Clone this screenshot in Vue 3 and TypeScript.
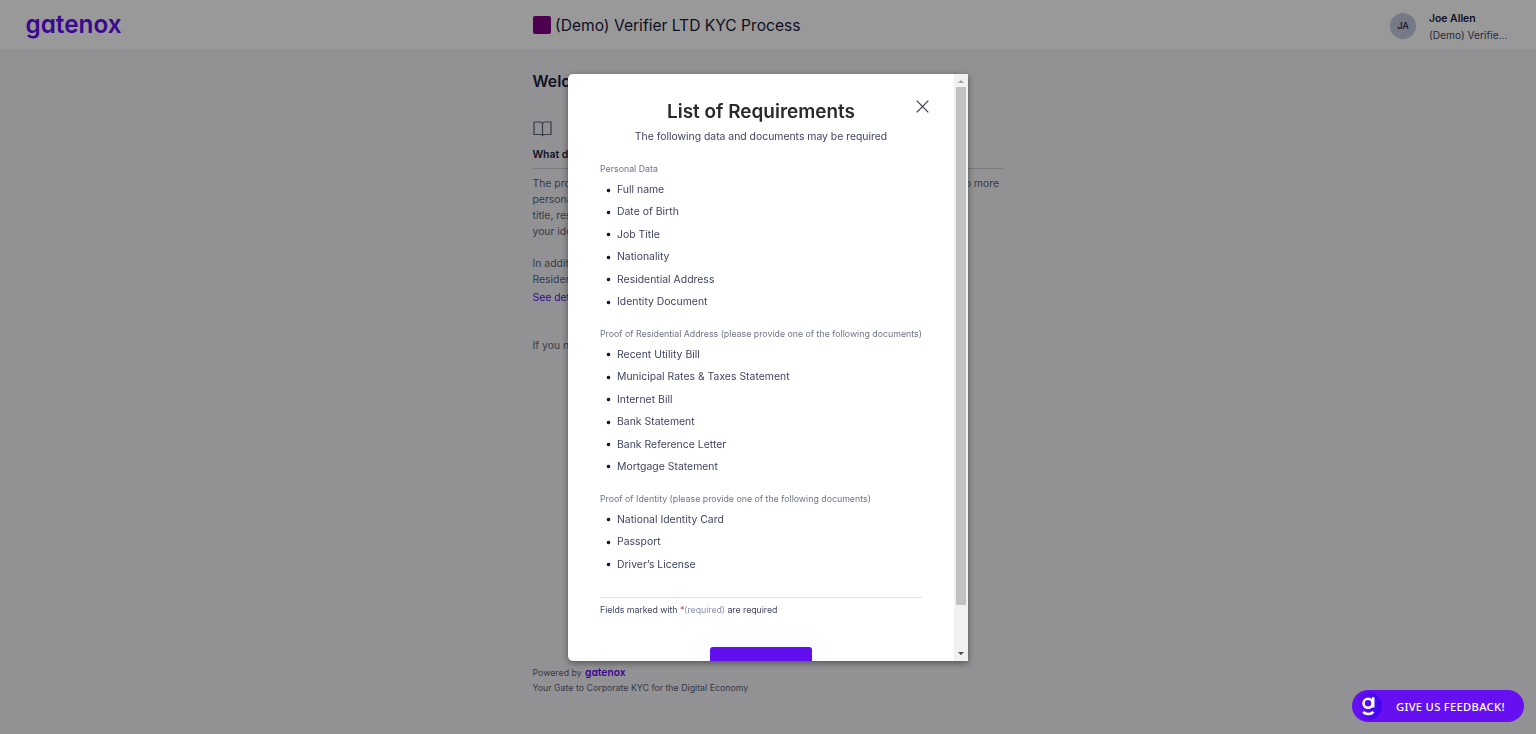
<script setup lang="ts">
interface Group {
  label: string
  items: string[]
}

const groups: Group[] = [
  {
    label: 'Personal Data',
    items: ['Full name', 'Date of Birth', 'Job Title', 'Nationality', 'Residential Address', 'Identity Document'],
  },
  {
    label: 'Proof of Residential Address (please provide one of the following documents)',
    items: [
      'Recent Utility Bill',
      'Municipal Rates & Taxes Statement',
      'Internet Bill',
      'Bank Statement',
      'Bank Reference Letter',
      'Mortgage Statement',
    ],
  },
  {
    label: 'Proof of Identity (please provide one of the following documents)',
    items: ['National Identity Card', 'Passport', 'Driver’s License'],
  },
]
</script>

<template>
  <div class="app">
    <header class="topbar">
      <svg class="logo" width="98" height="30" viewBox="0 0 98 30">
        <text class="wordmark" x="0.500" y="22.500" font-size="25.500" textLength="96" lengthAdjust="spacingAndGlyphs">gatenox</text>
      </svg>
      <div class="process">
        <span class="swatch"></span>
        <span class="process-name">(Demo) Verifier LTD KYC Process</span>
      </div>
      <div class="user">
        <span class="avatar">JA</span>
        <div class="who">
          <div class="who-name">Joe Allen</div>
          <div class="who-org">(Demo) Verifie...</div>
        </div>
      </div>
    </header>

    <main class="column">
      <h1 class="welcome">Welcome</h1>
      <svg class="book" width="19" height="16" viewBox="0 0 19 16" fill="none" stroke="#5b6378" stroke-width="1.200">
        <path d="M9.500 3C9.500 1.800 8.300 1 7 1H1v12.500h6.500c1.100 0 2 .7 2 1.800 0-1.100.9-1.800 2-1.800H18V1h-6c-1.300 0-2.500.8-2.500 2v12" />
      </svg>
      <h2 class="question">What do I need?</h2>
      <div class="intro">
        <div class="line"><span>The process</span><span>to more</span></div>
        <div class="line">personal</div>
        <div class="line">title, residential</div>
        <div class="line">your identity</div>
        <div class="line blank"></div>
        <div class="line">In addition</div>
        <div class="line">Residential</div>
        <a class="details">See details</a>
      </div>
      <p class="help">If you need</p>
      <footer class="footer">
        <div class="powered">
          <span>Powered by</span>
          <svg class="mini-logo" width="42" height="14" viewBox="0 0 42 14">
            <text class="wordmark" x="0" y="10" font-size="11" textLength="40.500" lengthAdjust="spacingAndGlyphs">gatenox</text>
          </svg>
        </div>
        <div class="tagline">Your Gate to Corporate KYC for the Digital Economy</div>
      </footer>
    </main>

    <div class="overlay">
      <section class="modal">
        <div class="body">
          <svg class="close" width="13" height="13" viewBox="0 0 13 13" stroke="#2b2d4d" stroke-width="1.100">
            <path d="M.7.7l11.600 11.600M12.300.7L.7 12.300" />
          </svg>
          <h3 class="title">List of Requirements</h3>
          <p class="subtitle">The following data and documents may be required</p>
          <div v-for="group in groups" :key="group.label" class="group">
            <div class="label">{{ group.label }}</div>
            <ul class="list">
              <li v-for="item in group.items" :key="item">{{ item }}</li>
            </ul>
          </div>
          <div class="note">
            Fields marked with <span class="star">*</span><span class="req">(required)</span> are required
          </div>
          <button class="action" type="button"></button>
        </div>
        <div class="scrollbar">
          <svg class="arrow" width="14" height="13" viewBox="0 0 14 13"><path d="M4 9L7 6l3 3z" fill="#a3a3a3" /></svg>
          <div class="thumb"></div>
          <svg class="arrow" width="14" height="14" viewBox="0 0 14 14"><path d="M4 5L7 8.200l3-3.200z" fill="#505050" /></svg>
        </div>
      </section>
    </div>

    <button class="feedback" type="button">
      <svg class="g-mark" width="32" height="32" viewBox="0 0 32 32" fill="none">
        <defs>
          <linearGradient id="mark" x1="0" y1="0" x2="1" y2="0">
            <stop offset="0.100" stop-color="#6610f2" />
            <stop offset="1" stop-color="#3d05ee" />
          </linearGradient>
        </defs>
        <circle cx="16" cy="16" r="14" fill="url(#mark)" />
        <circle cx="16" cy="13.300" r="4.500" stroke="#fff" stroke-width="2.600" />
        <path d="M21.200 7.300v10.200M11.200 21.800c2.500 2.900 7.700 2.900 10.200 0" stroke="#fff" stroke-width="2.600" />
      </svg>
      <span>GIVE US FEEDBACK!</span>
    </button>
  </div>
</template>

<style>
body {
  margin: 0;
  overflow: hidden;
}
</style>

<style scoped>
.app {
  height: 734px;
  overflow: hidden;
  background: #f4f4f7;
  font-family: Inter, 'Liberation Sans', sans-serif;
  color: #1a1a3c;
}
h1, h2, h3, p, ul {
  margin: 0;
  padding: 0;
}
.topbar {
  height: 50px;
  display: grid;
  grid-template-columns: 532.5px 1fr 146px;
  align-items: center;
  background: #fff;
  border-bottom: 1px solid #e8e8ec;
}
.logo {
  margin-left: 25px;
  overflow: visible;
}
.wordmark {
  font-family: Inter, sans-serif;
  font-weight: 600;
  font-feature-settings: 'cv11';
  fill: #620eef;
}
.process {
  display: flex;
  align-items: center;
  gap: 4.500px;
  font-size: 15.6px;
  font-weight: 400;
}
.swatch {
  width: 18px;
  height: 18px;
  border-radius: 2px;
  background: #800080;
}
.user {
  display: flex;
  gap: 13px;
  align-items: center;
  padding-top: 1px;
}
.avatar {
  width: 26px;
  height: 26px;
  border-radius: 50%;
  background: #c5cae0;
  font-size: 9.2px;
  font-weight: 500;
  line-height: 26px;
  text-align: center;
}
.who {
  padding-top: 2px;
  font-size: 10.4px;
  line-height: 16px;
}
.who-name {
  font-weight: 600;
}
.who-org {
  font-size: 10.2px;
  color: #3f4560;
}
.column {
  width: 470.5px;
  height: 683px;
  margin-left: 532.5px;
  display: flex;
  flex-direction: column;
  align-items: stretch;
}
.welcome {
  margin-top: 19px;
  font-size: 15.8px;
  line-height: 24px;
  font-weight: 600;
}
.book {
  margin-top: 27px;
}
.question {
  margin-top: 9.500px;
  padding-bottom: 5.500px;
  font-size: 10.4px;
  line-height: 16px;
  font-weight: 600;
  border-bottom: 1px solid #cfcfd6;
}
.intro {
  margin-top: 7px;
  font-size: 10.4px;
  line-height: 16px;
  color: #5b6378;
}
.line {
  display: flex;
  justify-content: space-between;
  height: 16px;
  padding-right: 4px;
}
.details {
  display: block;
  margin-top: 1.500px;
  color: #620eef;
}
.help {
  margin-top: 32px;
  font-size: 10.4px;
  line-height: 16px;
  color: #5b6378;
}
.footer {
  margin-top: auto;
  margin-bottom: 38px;
  font-size: 8.8px;
  line-height: 16px;
  color: #5b6378;
}
.powered {
  display: flex;
  align-items: center;
  gap: 3px;
  height: 15px;
}
.mini-logo {
  overflow: visible;
}
.overlay {
  position: fixed;
  inset: 0;
  display: flex;
  align-items: center;
  justify-content: center;
  background: rgba(0, 0, 0, 0.4);
}
.modal {
  width: 400px;
  height: 587px;
  display: flex;
  overflow: hidden;
  background: #fff;
  border-radius: 5px 0 0 5px;
  box-shadow: 0 2px 7px rgba(0, 0, 0, 0.45);
}
.body {
  position: relative;
  width: 322px;
  padding: 26.500px 32px 0;
  overflow: hidden;
}
.close {
  position: absolute;
  top: 26.500px;
  right: 25px;
}
.title {
  font-size: 18.95px;
  line-height: 24px;
  font-weight: 600;
  text-align: center;
  color: #2a2a2e;
}
.subtitle {
  margin-top: 4.500px;
  margin-bottom: 16.700px;
  font-size: 10.4px;
  line-height: 16px;
  text-align: center;
  color: #3f4560;
}
.group {
  margin-bottom: 13.4px;
}
.label {
  margin-bottom: 1.200px;
  font-size: 8.800px;
  line-height: 16px;
  white-space: nowrap;
  color: #6e7488;
}
.list {
  list-style: none;
}
.list li {
  display: flex;
  align-items: center;
  height: 22.4px;
  font-size: 10.4px;
  letter-spacing: 0.02px;
  color: #3f4560;
}
.list li::before {
  content: '';
  width: 5px;
  height: 5px;
  margin: 1px 6.500px 0 5.500px;
  background: radial-gradient(circle, #1a1a3c 1.400px, transparent 2.200px);
}
.note {
  margin-top: 21.200px;
  padding-top: 4px;
  border-top: 1px solid #e4e4e8;
  font-size: 8.800px;
  letter-spacing: -0.04px;
  line-height: 16px;
  color: #3f4560;
}
.star {
  color: #c0304a;
}
.req {
  color: #8b93ab;
}
.action {
  display: block;
  width: 102px;
  height: 32px;
  margin: 29px auto 0;
  padding: 0;
  border: 0;
  border-radius: 3px;
  background: #620eef;
  box-shadow: 0 0 22px rgba(98, 140, 239, 0.1);
}
.scrollbar {
  width: 14px;
  display: flex;
  flex-direction: column;
  align-items: center;
  background: #f1f1f1;
}
.thumb {
  width: 10px;
  height: 518px;
  background: #c1c1c1;
}
.arrow:last-child {
  margin-top: auto;
}
.feedback {
  position: fixed;
  right: 12px;
  bottom: 12px;
  width: 172px;
  height: 32px;
  display: flex;
  align-items: center;
  gap: 12px;
  padding: 0;
  border: 0;
  border-radius: 16px;
  background: #6610f2;
  color: #fff;
  font-family: 'Noto Sans', 'Open Sans', sans-serif;
  font-size: 11.2px;
  font-weight: 500;
  letter-spacing: 0.3px;
  white-space: nowrap;
}
</style>
